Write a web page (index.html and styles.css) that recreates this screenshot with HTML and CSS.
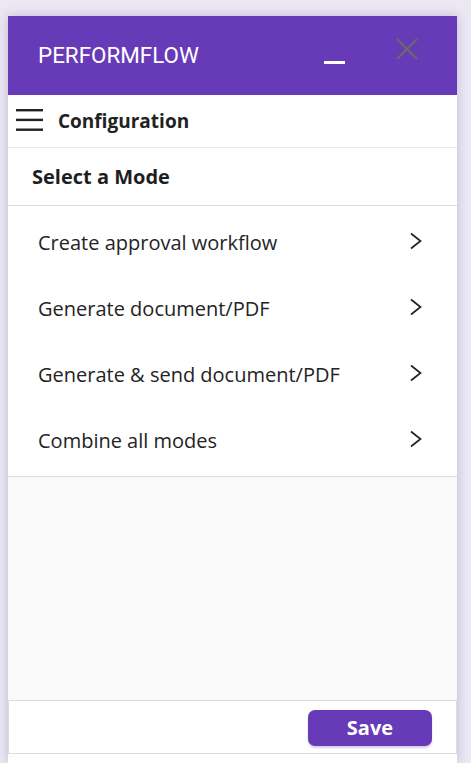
FILE: index.html
```html
<!DOCTYPE html>
<html>
<head>
<meta charset="utf-8">
<link rel="stylesheet" href="styles.css">
</head>
<body>
<div class="panel">
  <header class="titlebar">
    <span class="title">PERFORMFLOW</span>
    <span class="min"></span>
    <svg class="close" width="22" height="22" viewBox="0 0 22 22"><path d="M1 1 L21 21 M21 1 L1 21" stroke="#6a6a6a" stroke-width="2.2" fill="none"/></svg>
  </header>
  <div class="navrow">
    <svg class="burger" width="27" height="22" viewBox="0 0 27 22"><rect x="0" y="0" width="27" height="2.4" fill="#222"/><rect x="0" y="9.7" width="27" height="2.4" fill="#222"/><rect x="0" y="19.5" width="27" height="2.4" fill="#222"/></svg>
    <span class="navtitle">Configuration</span>
  </div>
  <div class="section">Select a Mode</div>
  <ul class="list">
    <li class="item"><span>Create approval workflow</span><svg class="chev" width="14" height="18" viewBox="0 0 14 18"><path d="M2 1.5 L11.5 9 L2 16.5" stroke="#222" stroke-width="1.7" fill="none"/></svg></li>
    <li class="item"><span>Generate document/PDF</span><svg class="chev" width="14" height="18" viewBox="0 0 14 18"><path d="M2 1.5 L11.5 9 L2 16.5" stroke="#222" stroke-width="1.7" fill="none"/></svg></li>
    <li class="item"><span>Generate &amp; send document/PDF</span><svg class="chev" width="14" height="18" viewBox="0 0 14 18"><path d="M2 1.5 L11.5 9 L2 16.5" stroke="#222" stroke-width="1.7" fill="none"/></svg></li>
    <li class="item"><span>Combine all modes</span><svg class="chev" width="14" height="18" viewBox="0 0 14 18"><path d="M2 1.5 L11.5 9 L2 16.5" stroke="#222" stroke-width="1.7" fill="none"/></svg></li>
  </ul>
  <div class="spacer"></div>
  <footer class="footer">
    <button class="save">Save</button>
  </footer>
  <div class="tail"></div>
</div>
</body>
</html>
```
FILE: styles.css
```css
html, body {
  margin: 0;
  padding: 0;
}
body {
  background: #ebe7f3;
  height: 763px;
  overflow: hidden;
  font-family: "Open Sans", "Noto Sans", sans-serif;
  padding: 16px 0 0 8px;
  box-sizing: border-box;
}
.panel {
  width: 449px;
  height: 747px;
  background: #fff;
  display: flex;
  flex-direction: column;
  box-shadow: 0 0 10px rgba(90, 70, 130, 0.28);
}
.titlebar {
  height: 79px;
  background: #673ab7;
  display: flex;
  align-items: center;
  box-sizing: border-box;
  padding: 0 0 0 30px;
  flex-shrink: 0;
}
.title {
  font-family: Roboto, sans-serif;
  color: #fff;
  font-size: 22.4px;
  margin-top: -1px;
  flex: 1;
}
.min {
  width: 21px;
  height: 3px;
  background: #fff;
  margin-top: 14px;
  margin-right: 51px;
}
.close {
  margin-right: 39px;
  margin-top: -14px;
}
.navrow {
  height: 52px;
  border-bottom: 1px solid #e8e8ee;
  display: flex;
  align-items: center;
  padding-left: 8px;
  flex-shrink: 0;
}
.burger {
  margin-top: -3px;
}
.navtitle {
  font-weight: 700;
  font-size: 19px;
  color: #222;
  margin-left: 15px;
}
.section {
  height: 58px;
  box-sizing: border-box;
  border-bottom: 1px solid #dcdcdc;
  display: flex;
  align-items: center;
  padding-left: 24px;
  font-weight: 700;
  font-size: 20px;
  color: #1e1e1e;
  flex-shrink: 0;
}
.list {
  list-style: none;
  margin: 0;
  padding: 3px 0 3px;
  border-bottom: 1px solid #dcdcdc;
  flex-shrink: 0;
}
.item {
  height: 66px;
  display: flex;
  align-items: center;
  justify-content: space-between;
  padding: 0 34px 0 30px;
  font-size: 20px;
  color: #242424;
}
.chev {
  margin-top: -2px;
}
.spacer {
  flex: 1;
  background: #f9f9f9;
}
.footer {
  height: 54px;
  box-sizing: border-box;
  border: 1px solid #dcdcdc;
  display: flex;
  align-items: center;
  justify-content: flex-end;
  padding-right: 24px;
  flex-shrink: 0;
}
.save {
  width: 124px;
  height: 36px;
  background: #673ab7;
  color: #fff;
  border: none;
  border-radius: 7px;
  font-family: "Open Sans", "Noto Sans", sans-serif;
  font-weight: 700;
  font-size: 20px;
  line-height: 1;
  box-shadow: 0 2px 2px rgba(103, 58, 183, 0.25);
  margin-top: 1px;
}
.tail {
  height: 9px;
  flex-shrink: 0;
}
```
